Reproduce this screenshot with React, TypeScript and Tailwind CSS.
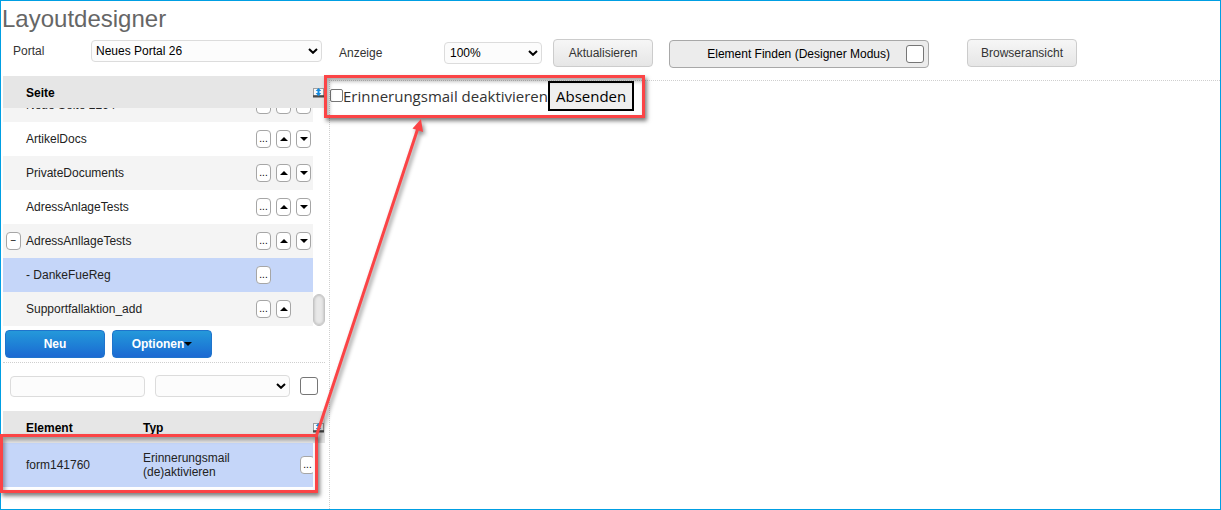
import React from "react";

const fieldClass =
  "rounded border border-[#dcdcdc] bg-[#fcfcfc] text-xs text-black";

const greyButton =
  "h-7 rounded border border-[#cccccc] bg-gradient-to-b from-[#f6f6f6] to-[#e6e6e6] text-xs text-[#333333]";

const blueButton =
  "flex h-7 w-25 items-center justify-center rounded border border-[#1f74cc] bg-gradient-to-b from-[#2599da] to-[#1d69d2] text-xs font-bold text-white";

const checkBox =
  "size-[18px] shrink-0 appearance-none rounded-[3px] border border-[#767676] bg-white checked:bg-[#0075ff]";

function Chevron() {
  return (
    <svg
      viewBox="0 0 10 6"
      className="pointer-events-none absolute top-2 right-1 h-[6px] w-[10px]"
      aria-hidden="true"
    >
      <path d="M1 1l4 3.8L9 1" fill="none" stroke="#000" strokeWidth="2" />
    </svg>
  );
}

function Triangle({ down = false }: { down?: boolean }) {
  return (
    <svg viewBox="0 0 8 4" className="h-1 w-2" aria-hidden="true">
      <path d={down ? "M0 0h8L4 4z" : "M0 4h8L4 0z"} fill="#000" />
    </svg>
  );
}

function SmallButton({
  label,
  children,
}: {
  label: string;
  children: React.ReactNode;
}) {
  return (
    <button
      type="button"
      aria-label={label}
      className="flex h-[18px] w-[15px] shrink-0 items-center justify-center rounded border border-[#a6a6a6] bg-white text-[10px] leading-none text-black"
    >
      {children}
    </button>
  );
}

function ExpandIcon() {
  return (
    <svg viewBox="0 0 11 10" className="h-[10px] w-[11px]" aria-hidden="true">
      <path d="M1 1h9v6H1z" fill="#f8fafc" />
      <path d="M0 0.5h11M0.5 0v8M10.5 0v8" stroke="#a0a0a0" strokeWidth="1" />
      <path d="M0 7.200h11v2.300H0z" fill="#4a4a4a" />
      <path d="M5.500 0L8.300 3H6.500v2h1.800L5.500 8.300 2.700 5h1.800V3H2.700z" fill="#1389de" />
    </svg>
  );
}

type Page = {
  name: string;
  up?: boolean;
  down?: boolean;
  open?: boolean;
  selected?: boolean;
};

const pages: Page[] = [
  { name: "Neue Seite 2264", up: true, down: true },
  { name: "ArtikelDocs", up: true, down: true },
  { name: "PrivateDocuments", up: true, down: true },
  { name: "AdressAnlageTests", up: true, down: true },
  { name: "AdressAnllageTests", up: true, down: true, open: true },
  { name: "- DankeFueReg", selected: true },
  { name: "Supportfallaktion_add", up: true },
];

function PageRow({ page, shaded }: { page: Page; shaded: boolean }) {
  const background = page.selected
    ? "bg-[#c5d6f9]"
    : shaded
      ? "bg-[#f4f4f4]"
      : "bg-white";
  return (
    <tr className={`flex h-[34px] shrink-0 items-center ${background}`}>
      <td className="w-[23px] pl-[3px]">
        {page.open && <SmallButton label="Zuklappen">−</SmallButton>}
      </td>
      <td className="flex-1">{page.name}</td>
      <td className="flex w-[57px] gap-[5px]">
        <SmallButton label="Mehr">...</SmallButton>
        {page.up && (
          <SmallButton label="Nach oben">
            <Triangle />
          </SmallButton>
        )}
        {page.down && (
          <SmallButton label="Nach unten">
            <Triangle down />
          </SmallButton>
        )}
      </td>
    </tr>
  );
}

function Sidebar() {
  return (
    <aside className="w-[328px] shrink-0 pr-1 pl-0.5">
      <div className="flex h-[39px] items-start pl-2.5">
        <label htmlFor="portal" className="w-[78px] pt-1.5 text-[#333333]">
          Portal
        </label>
        <div className="relative mt-[3px]">
          <select
            id="portal"
            className={`${fieldClass} block h-[22px] w-[231px] appearance-none pl-1`}
          >
            <option>Neues Portal 26</option>
          </select>
          <Chevron />
        </div>
      </div>

      <div className="relative">
        <table className="block">
          <thead className="block">
            <tr className="flex h-8 items-center bg-[#e6e6e6] pt-0.5 text-black">
              <th className="flex-1 pl-[23px] text-left">Seite</th>
              <th className="w-3">
                <button type="button" aria-label="Seiten ausklappen" className="block">
                  <ExpandIcon />
                </button>
              </th>
            </tr>
          </thead>
          <tbody className="mr-3 flex h-[218px] flex-col justify-end overflow-hidden text-[#222222]">
            {pages.map((page, index) => (
              <PageRow key={page.name} page={page} shaded={index % 2 === 0} />
            ))}
          </tbody>
        </table>
        <div className="absolute right-0 bottom-0 h-8 w-3 rounded-md border border-[#c4c4c4] bg-[#e8e8e8] shadow-[inset_0_0_3px_#aaaaaa]" />
      </div>

      <div className="flex gap-[7px] border-b border-dotted border-[#cfcfcf] px-0.5 py-1">
        <button type="button" className={blueButton}>
          Neu
        </button>
        <button type="button" className={blueButton}>
          Optionen
          <Triangle down />
        </button>
      </div>

      <div className="flex h-12 items-center gap-2.5 pb-0.5 pl-[7px]">
        <input
          type="text"
          aria-label="Element suchen"
          className={`${fieldClass} h-[21px] w-[135px] px-1`}
        />
        <div className="relative">
          <select
            aria-label="Typ filtern"
            className={`${fieldClass} block h-[22px] w-[135px] appearance-none pl-1`}
          >
            <option></option>
          </select>
          <Chevron />
        </div>
        <input type="checkbox" aria-label="Filter aktiv" className={checkBox} />
      </div>

      <div className="relative">
        <table className="block">
          <thead className="block">
            <tr className="flex h-8 items-center bg-[#e6e6e6] pt-0.5 text-black">
              <th className="w-[140px] pl-[23px] text-left">Element</th>
              <th className="flex-1 text-left">Typ</th>
              <th className="w-3">
                <button type="button" aria-label="Elemente ausklappen" className="block">
                  <ExpandIcon />
                </button>
              </th>
            </tr>
          </thead>
          <tbody className="mr-3 block overflow-hidden text-[#222222]">
            <tr className="flex h-11 items-center bg-[#c5d6f9]">
              <td className="w-[140px] shrink-0 pl-[23px]">form141760</td>
              <td className="w-[157px] shrink-0 pr-10 leading-[14px]">
                Erinnerungsmail (de)aktivieren
              </td>
              <td>
                <SmallButton label="Mehr">...</SmallButton>
              </td>
            </tr>
          </tbody>
        </table>
        <div className="pointer-events-none absolute top-[23px] right-[7px] -left-[3px] h-[59px] border-3 border-[#fb4446] shadow-[2px_3px_4px_rgba(0,0,0,0.5),inset_2px_3px_4px_rgba(0,0,0,0.35)]" />
      </div>
    </aside>
  );
}

function Toolbar() {
  return (
    <div className="flex h-[43px] items-start pt-0.5 pl-2.5 text-[#333333]">
      <label htmlFor="zoom" className="w-[105px] pt-[6px]">
        Anzeige
      </label>
      <div className="relative mt-[3px]">
        <select
          id="zoom"
          className={`${fieldClass} block h-[22px] w-[98px] appearance-none pl-[5px]`}
        >
          <option>100%</option>
        </select>
        <Chevron />
      </div>
      <button type="button" className={`${greyButton} ml-[11px] w-25`}>
        Aktualisieren
      </button>
      <label className="mt-px ml-4 flex h-7 w-[260px] items-center justify-end gap-4 rounded border border-[#a8a8a8] bg-[#ececec] pr-1 text-black">
        Element Finden (Designer Modus)
        <input type="checkbox" className={checkBox} />
      </label>
      <button type="button" className={`${greyButton} ml-[38px] w-[110px]`}>
        Browseransicht
      </button>
    </div>
  );
}

export default function App() {
  return (
    <div className="relative flex min-h-screen flex-col border border-[#009fe3] bg-white font-['Liberation_Sans',Arial,sans-serif] text-xs">
      <h1 className="h-9 pl-px text-2xl leading-9 text-[#666666]">
        Layoutdesigner
      </h1>
      <div className="flex flex-1">
        <Sidebar />
        <main className="flex min-w-0 flex-1 flex-col">
          <Toolbar />
          <div className="relative flex-1 border-t border-l border-dotted border-[#cfcfcf]">
            <form
              className="flex items-center font-['Open_Sans','Noto_Sans',sans-serif] text-[15px] text-[#333333]"
              onSubmit={(event) => event.preventDefault()}
            >
              <label className="flex items-center">
                <input
                  type="checkbox"
                  className="size-[13px] appearance-none rounded-[2px] border border-[#767676] bg-white checked:bg-[#0075ff]"
                />
                Erinnerungsmail deaktivieren
              </label>
              <button
                type="submit"
                className="h-[30px] border-2 border-black bg-[#efefef] px-1.5 text-black"
              >
                Absenden
              </button>
            </form>
            <div className="pointer-events-none absolute -top-1.5 -left-1.5 h-[43px] w-[321px] border-3 border-[#fb4446] shadow-[2px_3px_4px_rgba(0,0,0,0.5),inset_2px_3px_4px_rgba(0,0,0,0.35)]" />
          </div>
        </main>
      </div>
      <svg
        viewBox="0 0 120 325"
        className="pointer-events-none absolute top-[115px] left-[309px] h-[325px] w-[120px] drop-shadow-[2px_3px_2px_rgba(0,0,0,0.45)]"
        aria-hidden="true"
      >
        <path d="M6 321L108 12" stroke="#fb4446" strokeWidth="3" />
        <path d="M111 3L102.500 12.500L113 16z" fill="#fb4446" />
      </svg>
    </div>
  );
}
